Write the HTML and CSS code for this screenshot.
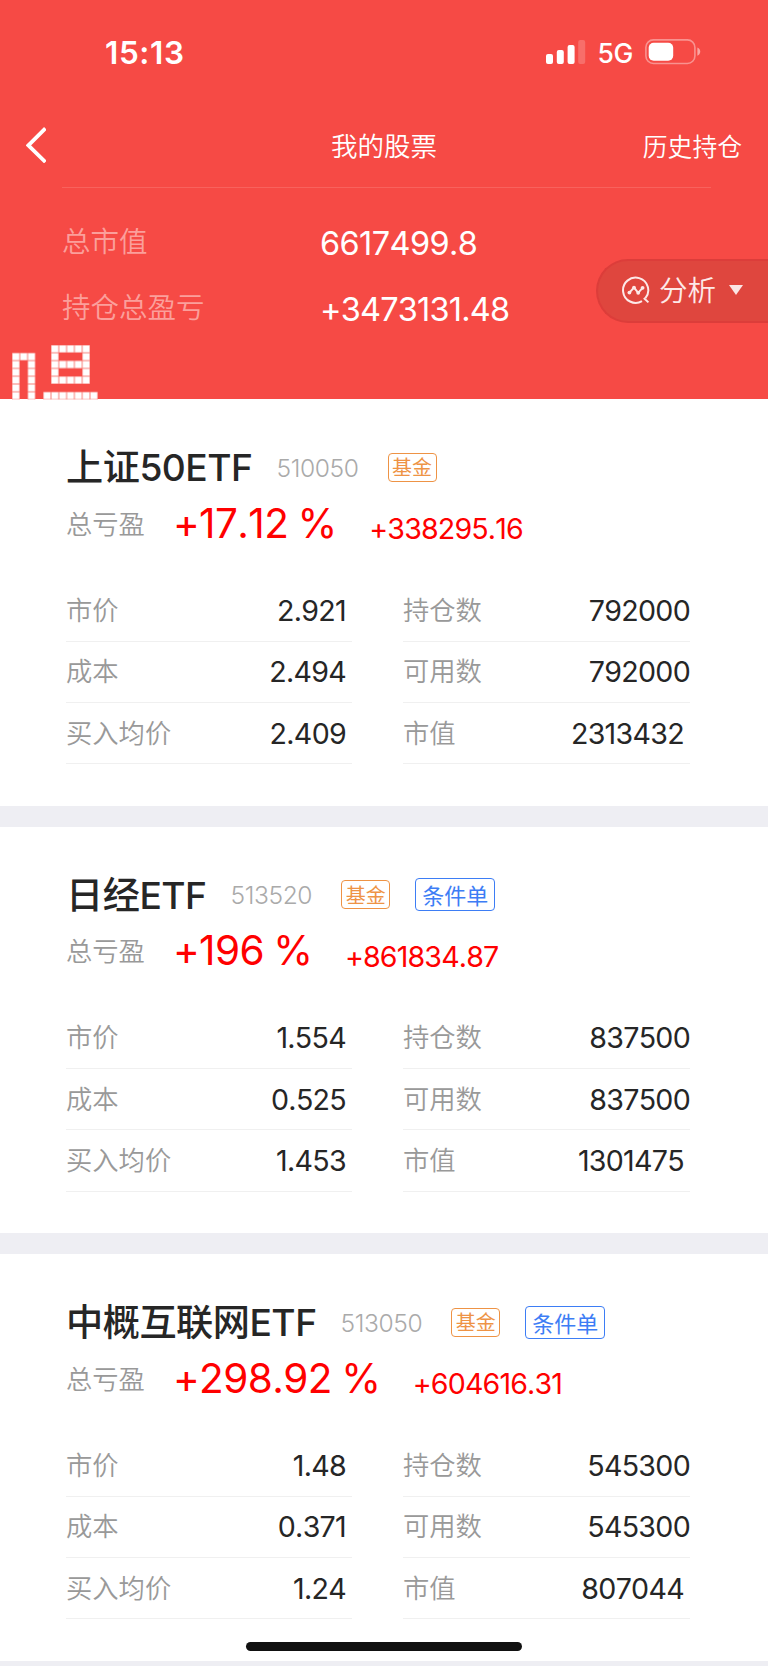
FILE: index.html
```html
<!DOCTYPE html>
<html lang="zh-CN">
<head>
    <meta charset="UTF-8">
    <meta name="viewport" content="width=device-width, initial-scale=1.0">
    <title>我的股票</title>
    <link rel="stylesheet" href="styles.css">
</head>
<body>
    <header class="header">
        <div class="status-bar">
            <span class="time">15:13</span>
            <div class="status-icons">
                <svg class="signal" width="40" height="26" viewBox="0 0 40 26" fill="#fff">
                    <rect x="0" y="15" width="7" height="10" rx="2"/>
                    <rect x="10.8" y="11" width="7" height="14" rx="2"/>
                    <rect x="21.6" y="6" width="7" height="19" rx="2"/>
                    <rect x="32.2" y="1" width="7" height="24" rx="2" opacity="0.2"/>
                </svg>
                <span class="network">5G</span>
                <svg class="battery" width="57" height="26" viewBox="0 0 57 26">
                    <rect x="0.9" y="0.9" width="49" height="23.6" rx="7.5" fill="none" stroke="#fff" stroke-opacity="0.4" stroke-width="1.6"/>
                    <rect x="3.7" y="3.7" width="24.5" height="18" rx="5" fill="#fff"/>
                    <path d="M52.4 8.6c3.8 1.6 3.8 6.6 0 8.2z" fill="#fff" opacity="0.5"/>
                </svg>
            </div>
        </div>

        <nav class="nav">
            <svg class="back" width="20" height="36" viewBox="0 0 20 36" fill="none" stroke="#fff" stroke-width="3.8">
                <path d="M19.4 1.4L2.4 18.4l17 16.6"/>
            </svg>
            <h1>我的股票</h1>
            <a class="history" href="#">历史持仓</a>
        </nav>

        <div class="summary">
            <div class="summary-row">
                <span class="summary-label">总市值</span>
                <span class="summary-value total-value">6617499.8</span>
            </div>
            <div class="summary-row">
                <span class="summary-label">持仓总盈亏</span>
                <span class="summary-value total-profit">+3473131.48</span>
            </div>
        </div>

        <div class="analysis">
            <svg width="28" height="28" viewBox="0 0 28 28" fill="none" stroke="#fde9e8" stroke-width="2">
                <path d="M23.4 22.2A12.6 12.6 0 1 0 20 25.1"/>
                <path d="M21.8 22l4.6 4.4"/>
                <path d="M7.4 16.6l4.6-5 4.2 5.2L20.6 11.8"/>
                <g fill="#fde9e8" stroke="none">
                    <circle cx="7.4" cy="16.6" r="1.9"/>
                    <circle cx="12" cy="11.6" r="1.9"/>
                    <circle cx="16.2" cy="16.8" r="1.9"/>
                    <circle cx="20.6" cy="11.8" r="1.9"/>
                </g>
            </svg>
            <span class="analysis-text">分析</span>
            <span class="arrow"></span>
        </div>

        <!-- dot matrix logo -->
        <svg class="pixel-logo" width="87" height="55" viewBox="0 0 87 55">
            <defs>
                <pattern id="cell" width="7.8" height="7.8" patternUnits="userSpaceOnUse">
                    <rect width="7.8" height="7.8" fill="#f8807b"/>
                    <rect x="0.5" y="0.5" width="6.8" height="6.8" fill="#fff"/>
                </pattern>
            </defs>
            <path fill="url(#cell)" fill-rule="evenodd" d="M0 7.8H23.4V54.6H15.6V15.6H7.8V54.6H0z M39 0H78V39H39z M46.8 7.8V15.6H70.2V7.8z M46.8 23.4V31.2H70.2V23.4z M31.2 46.8H85.8V54.6H31.2z"/>
        </svg>
    </header>

    <main>
        <section class="card">
            <div class="card-title">
                <h2>上证50ETF</h2>
                <span class="code">510050</span>
                <span class="tag fund">基金</span>
            </div>
            <div class="profit">
                <span class="label">总亏盈</span>
                <span class="percent">+17.12 %</span>
                <span class="amount">+338295.16</span>
            </div>
            <div class="details">
                <div class="row"><span class="label">市价</span><span class="value">2.921</span></div>
                <div class="row"><span class="label">持仓数</span><span class="value">792000</span></div>
                <div class="row"><span class="label">成本</span><span class="value">2.494</span></div>
                <div class="row"><span class="label">可用数</span><span class="value">792000</span></div>
                <div class="row"><span class="label">买入均价</span><span class="value">2.409</span></div>
                <div class="row market"><span class="label">市值</span><span class="value">2313432</span></div>
            </div>
        </section>

        <section class="card">
            <div class="card-title">
                <h2>日经ETF</h2>
                <span class="code">513520</span>
                <span class="tag fund">基金</span>
                <span class="tag order">条件单</span>
            </div>
            <div class="profit">
                <span class="label">总亏盈</span>
                <span class="percent">+196 %</span>
                <span class="amount">+861834.87</span>
            </div>
            <div class="details">
                <div class="row"><span class="label">市价</span><span class="value">1.554</span></div>
                <div class="row"><span class="label">持仓数</span><span class="value">837500</span></div>
                <div class="row"><span class="label">成本</span><span class="value">0.525</span></div>
                <div class="row"><span class="label">可用数</span><span class="value">837500</span></div>
                <div class="row"><span class="label">买入均价</span><span class="value">1.453</span></div>
                <div class="row market"><span class="label">市值</span><span class="value">1301475</span></div>
            </div>
        </section>

        <section class="card">
            <div class="card-title">
                <h2>中概互联网ETF</h2>
                <span class="code">513050</span>
                <span class="tag fund">基金</span>
                <span class="tag order">条件单</span>
            </div>
            <div class="profit">
                <span class="label">总亏盈</span>
                <span class="percent">+298.92 %</span>
                <span class="amount">+604616.31</span>
            </div>
            <div class="details">
                <div class="row"><span class="label">市价</span><span class="value">1.48</span></div>
                <div class="row"><span class="label">持仓数</span><span class="value">545300</span></div>
                <div class="row"><span class="label">成本</span><span class="value">0.371</span></div>
                <div class="row"><span class="label">可用数</span><span class="value">545300</span></div>
                <div class="row"><span class="label">买入均价</span><span class="value">1.24</span></div>
                <div class="row market"><span class="label">市值</span><span class="value">807044</span></div>
            </div>
        </section>
    </main>

    <div class="home-indicator"></div>
</body>
</html>
```

FILE: styles.css
```css
* {
    box-sizing: border-box;
}

body {
    margin: 0;
    height: 1666px;
    overflow: hidden;
    position: relative;
    background-color: #eeeef3;
    font-family: Inter, "Noto Sans CJK SC", sans-serif;
    font-kerning: none;
    color: #262626;
}

h1, h2 {
    margin: 0;
}

svg {
    display: block;
    flex-shrink: 0;
}

/* Header */
.header {
    position: relative;
    height: 399.2px;
    background-color: #f64a45;
    color: #fff;
}

.status-bar {
    display: flex;
    justify-content: space-between;
    height: 103px;
    padding: 32px 66px 0 105px;
}

.time {
    font-size: 31.5px;
    font-weight: 600;
    line-height: 42px;
    letter-spacing: 0.6px;
}

.status-icons {
    display: flex;
    align-items: flex-start;
    padding-top: 7px;
}

.network {
    width: 34px;
    margin: 0 13.5px 0 12px;
    font-size: 26.5px;
    font-weight: 500;
    line-height: 29px;
    letter-spacing: -0.5px;
}

.nav {
    display: grid;
    grid-template-columns: 1fr auto 1fr;
    align-items: center;
    height: 84px;
    padding: 0 26px;
}

.nav h1 {
    padding-bottom: 2px;
    font-size: 26.5px;
    font-weight: 350;
}

.history {
    justify-self: end;
    padding-bottom: 1px;
    color: #fff;
    font-size: 24.8px;
    font-weight: 350;
    text-decoration: none;
}

.summary {
    margin: 0 57px 0 62px;
    padding-top: 21px;
    border-top: 1px solid #f8625d;
}

.summary-row {
    display: flex;
    align-items: center;
    height: 66px;
}

.summary-label {
    width: 258px;
    padding-bottom: 5px;
    font-size: 28.5px;
    font-weight: 350;
    color: #fb9f9b;
}

.summary-value {
    padding-top: 2px;
    font-size: 32.5px;
    font-weight: 400;
}

.total-value {
    letter-spacing: -0.6px;
}

.total-profit {
    letter-spacing: -0.8px;
}

.analysis {
    position: absolute;
    right: 0;
    top: 259px;
    width: 172px;
    height: 64px;
    padding-left: 23.5px;
    display: flex;
    align-items: center;
    background-color: #df463e;
    border: 2px solid #dc3d3a;
    border-right: none;
    border-radius: 32px 0 0 32px;
}

.analysis svg {
    margin-bottom: 2px;
}

.analysis-text {
    margin-left: 9.5px;
    padding-bottom: 5px;
    font-size: 28.5px;
    font-weight: 350;
    color: #fde9e8;
}

.arrow {
    margin-left: 13px;
    margin-bottom: 3px;
    border: 7px solid transparent;
    border-top: 10px solid #fbe5e4;
    border-bottom: none;
}

.pixel-logo {
    position: absolute;
    left: 11.5px;
    top: 344.5px;
}

/* Cards */
.card {
    height: 406.5px;
    margin-bottom: 21px;
    padding: 42px 78px 0 66px;
    background-color: #fff;
}

.card-title {
    display: flex;
    align-items: center;
    height: 52px;
}

.card-title h2 {
    padding-bottom: 4px;
    font-size: 37.2px;
    font-weight: 500;
    letter-spacing: -0.5px;
}

.code {
    margin-left: 24px;
    padding-top: 1px;
    font-size: 24.6px;
    font-weight: 300;
    letter-spacing: -0.4px;
    color: #aaa;
}

.tag {
    display: flex;
    align-items: center;
    justify-content: center;
    padding-bottom: 1px;
    border: 1.5px solid;
    border-radius: 4px;
}

.fund {
    width: 49px;
    height: 29px;
    margin-left: 29px;
    font-size: 20px;
    color: #ee9345;
}

.order {
    width: 80px;
    height: 33px;
    margin-left: 25px;
    font-size: 22px;
    color: #3d7df5;
}

.profit {
    display: flex;
    align-items: center;
    height: 62px;
}

.label {
    padding-bottom: 4px;
    font-size: 26.3px;
    font-weight: 350;
    color: #999;
}

.percent {
    margin-left: 28px;
    padding-bottom: 2px;
    font-size: 40.5px;
    font-weight: 400;
    letter-spacing: -0.6px;
    word-spacing: -1.5px;
    color: #f00;
}

.amount {
    margin-left: 32.5px;
    padding-top: 9px;
    font-size: 28.6px;
    font-weight: 400;
    letter-spacing: -0.85px;
    color: #f00;
}

.details {
    display: grid;
    grid-template-columns: 286px 287px;
    column-gap: 51px;
    padding-top: 25px;
}

.row {
    display: flex;
    justify-content: space-between;
    align-items: center;
    height: 61.33px;
    border-bottom: 1px solid #f0f0f0;
}

.value {
    font-size: 28.6px;
    font-weight: 400;
    letter-spacing: -0.7px;
}

.row:nth-child(odd) .value,
.market .value {
    padding-right: 6px;
}

.home-indicator {
    position: absolute;
    left: 246px;
    bottom: 15px;
    width: 276px;
    height: 9px;
    border-radius: 5px;
    background-color: #111;
}
```
